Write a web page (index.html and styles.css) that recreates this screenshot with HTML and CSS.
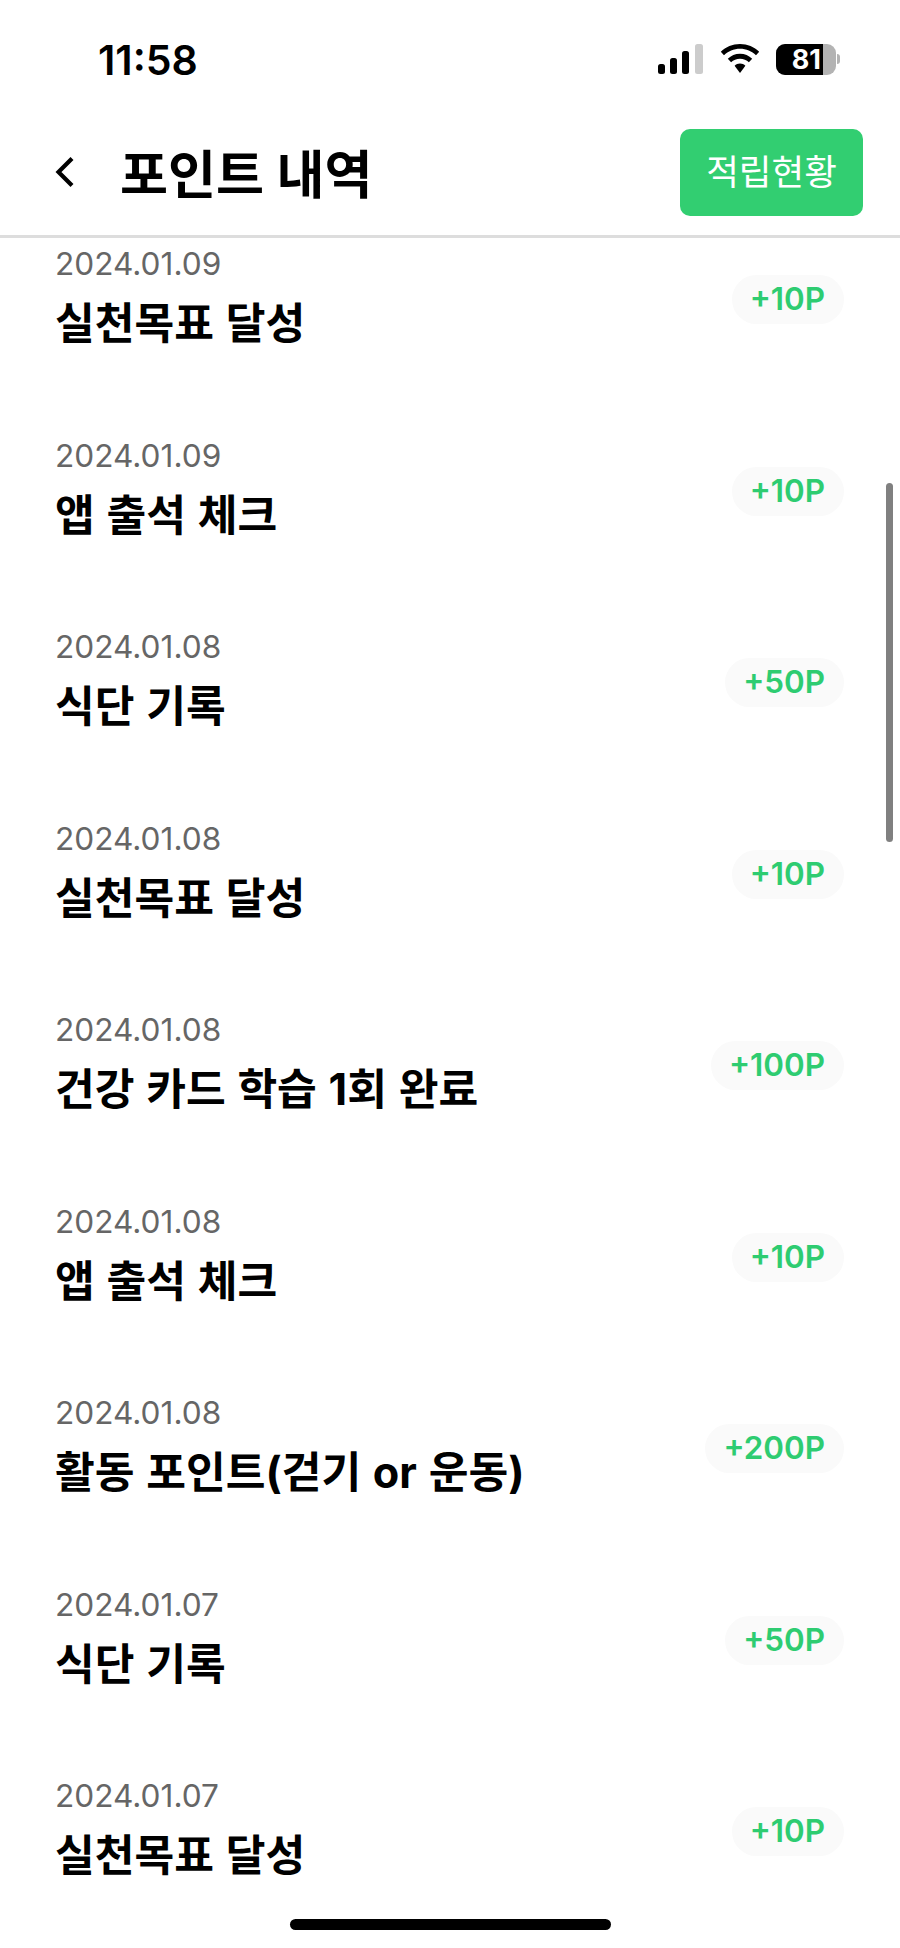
FILE: index.html
```html
<!DOCTYPE html>
<html lang="ko">
<head>
<meta charset="utf-8">
<title>포인트 내역</title>
<link rel="stylesheet" href="styles.css">
</head>
<body>
<div class="screen">
  <div class="status">
    <span class="time">11:58</span>
    <div class="status-icons">
      <svg class="signal" width="46" height="30" viewBox="0 0 46 30"><rect x="0" y="20" width="7" height="10" rx="2.5" fill="#000"/><rect x="12" y="14" width="7" height="16" rx="2.5" fill="#000"/><rect x="24" y="7" width="7" height="23" rx="2.5" fill="#000"/><rect x="37" y="0" width="8" height="30" rx="2.5" fill="#ccc"/></svg>
      <svg class="wifi" width="40" height="30" viewBox="0 0 40 30"><path d="M20 0C12.500 0 5.700 3 .8 7.800L4 11.300C8.100 7.300 13.800 4.800 20 4.800S31.900 7.300 36 11.300L39.200 7.800C34.300 3 27.500 0 20 0Z" fill="#000"/><path d="M20 9.800C15.300 9.800 11 11.700 7.800 14.800L11.100 18.300C13.400 16.100 16.500 14.700 20 14.700S26.600 16.100 28.900 18.300L32.200 14.800C29 11.700 24.700 9.800 20 9.800Z" fill="#000"/><path d="M20 19.500C17.900 19.500 16 20.300 14.600 21.700L20 29L25.400 21.700C24 20.300 22.100 19.500 20 19.500Z" fill="#000"/></svg>
      <div class="battery"><div class="battery-body"><span class="battery-fill">81</span></div><span class="battery-tip"></span></div>
    </div>
  </div>
  <header class="nav">
    <svg class="back" width="20" height="32" viewBox="0 0 20 32"><path d="M17 2.500L3.500 16L17 29.500" fill="none" stroke="#000" stroke-width="4.200"/></svg>
    <h1 class="title">포인트 내역</h1>
    <button class="action">적립현황</button>
  </header>
  <main class="list">
    <div class="row"><div class="info"><div class="date">2024.01.09</div><div class="name">실천목표 달성</div></div><span class="pill">+10P</span></div>
    <div class="row"><div class="info"><div class="date">2024.01.09</div><div class="name">앱 출석 체크</div></div><span class="pill">+10P</span></div>
    <div class="row"><div class="info"><div class="date">2024.01.08</div><div class="name">식단 기록</div></div><span class="pill">+50P</span></div>
    <div class="row"><div class="info"><div class="date">2024.01.08</div><div class="name">실천목표 달성</div></div><span class="pill">+10P</span></div>
    <div class="row"><div class="info"><div class="date">2024.01.08</div><div class="name">건강 카드 학습 1회 완료</div></div><span class="pill">+100P</span></div>
    <div class="row"><div class="info"><div class="date">2024.01.08</div><div class="name">앱 출석 체크</div></div><span class="pill">+10P</span></div>
    <div class="row"><div class="info"><div class="date">2024.01.08</div><div class="name">활동 포인트(걷기 or 운동)</div></div><span class="pill">+200P</span></div>
    <div class="row"><div class="info"><div class="date">2024.01.07</div><div class="name">식단 기록</div></div><span class="pill">+50P</span></div>
    <div class="row"><div class="info"><div class="date">2024.01.07</div><div class="name">실천목표 달성</div></div><span class="pill">+10P</span></div>
  </main>
  <div class="scrollbar"></div>
  <div class="home"></div>
</div>
</body>
</html>
```
FILE: styles.css
```css
* { box-sizing: border-box; }
html, body { margin: 0; padding: 0; }
body { background: #fff; font-family: Inter, "Noto Sans CJK KR", sans-serif; color: #000; }
.screen { position: relative; width: 900px; height: 1948px; overflow: hidden; background: #fff; }
.status { height: 104px; padding: 38px 60px 0 98px; display: flex; justify-content: space-between; align-items: flex-start; }
.time { font-size: 41px; line-height: 44px; font-weight: 600; }
.status-icons { display: flex; align-items: center; gap: 16px; height: 44px; margin-top: -1px; }
.signal, .wifi { display: block; }
.battery { display: flex; align-items: center; gap: 1px; }
.battery-body { width: 60px; height: 31px; border-radius: 9px; background: #b3b3b3; overflow: hidden; }
.battery-fill { display: block; width: 47px; height: 31px; background: #000; color: #fff; font-size: 27px; line-height: 31px; font-weight: 700; text-align: right; padding-right: 2px; }
.battery-tip { width: 3px; height: 10px; border-radius: 0 3px 3px 0; background: #b3b3b3; }
.nav { height: 134px; padding: 24px 37px 0 55px; display: flex; align-items: flex-start; border-bottom: 3px solid #ddd; }
.back { margin-top: 28px; flex: none; }
.title { margin: 0 0 0 45px; font-size: 52.200px; line-height: 88px; font-weight: 700; flex: 1; position: relative; top: 3px; }
.action { width: 183px; height: 87px; margin-top: 1px; border: 0; border-radius: 10px; background: #32ce71; color: #fff; font: 400 35.500px/87px Inter, "Noto Sans CJK KR", sans-serif; padding: 0; }
.list { padding: 8px 56px 0 55px; }
.row { height: 191.5px; display: flex; justify-content: space-between; align-items: flex-start; }
.date { font-size: 31.600px; line-height: 36px; color: #666; }
.name { font-size: 43.200px; line-height: 60px; font-weight: 700; margin-top: 11px; word-spacing: 1.500px; }
.pill { margin-top: 29px; height: 49px; padding: 0 19px 0 18px; border-radius: 25px; background: #fafafa; color: #2ecc71; font-size: 31.400px; line-height: 48px; font-weight: 600; }
.scrollbar { position: absolute; left: 886px; top: 483px; width: 7px; height: 359px; border-radius: 4px; background: #808080; }
.home { position: absolute; left: 290px; top: 1919px; width: 321px; height: 11px; border-radius: 6px; background: #000; }
```
